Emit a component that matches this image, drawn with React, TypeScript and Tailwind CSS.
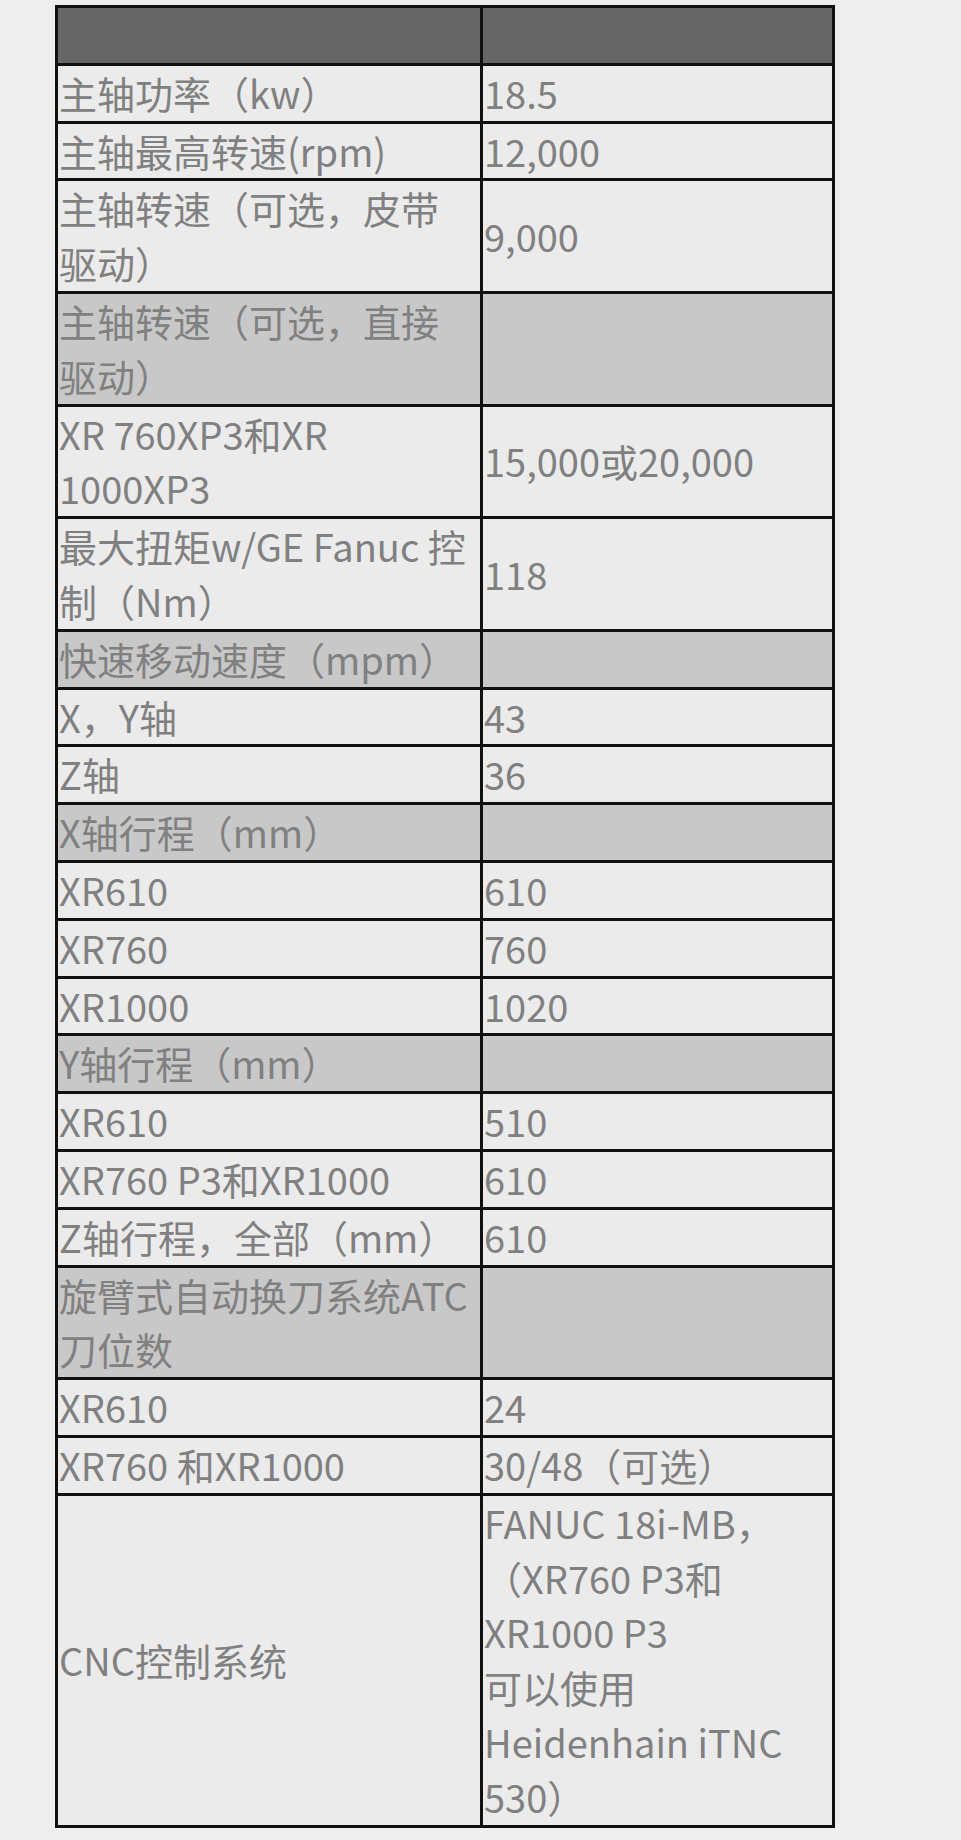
const rows: { left: string[]; right: string[]; shaded?: boolean }[] = [
  { left: ["主轴功率（kw）"], right: ["18.5"] },
  { left: ["主轴最高转速(rpm)"], right: ["12,000"] },
  { left: ["主轴转速（可选，皮带", "驱动）"], right: ["9,000"] },
  { left: ["主轴转速（可选，直接", "驱动）"], right: [""], shaded: true },
  { left: ["XR 760XP3和XR", "1000XP3"], right: ["15,000或20,000"] },
  { left: ["最大扭矩w/GE Fanuc 控", "制（Nm）"], right: ["118"] },
  { left: ["快速移动速度（mpm）"], right: [""], shaded: true },
  { left: ["X，Y轴"], right: ["43"] },
  { left: ["Z轴"], right: ["36"] },
  { left: ["X轴行程（mm）"], right: [""], shaded: true },
  { left: ["XR610"], right: ["610"] },
  { left: ["XR760"], right: ["760"] },
  { left: ["XR1000"], right: ["1020"] },
  { left: ["Y轴行程（mm）"], right: [""], shaded: true },
  { left: ["XR610"], right: ["510"] },
  { left: ["XR760 P3和XR1000"], right: ["610"] },
  { left: ["Z轴行程，全部（mm）"], right: ["610"] },
  { left: ["旋臂式自动换刀系统ATC", "刀位数"], right: [""], shaded: true },
  { left: ["XR610"], right: ["24"] },
  { left: ["XR760 和XR1000"], right: ["30/48（可选）"] },
  {
    left: ["CNC控制系统"],
    right: [
      "FANUC 18i-MB，",
      "（XR760 P3和",
      "XR1000 P3",
      "可以使用",
      "Heidenhain iTNC",
      "530）",
    ],
  },
];

function Lines({ lines }: { lines: string[] }) {
  return (
    <>
      {lines.map((line, i) => (
        <span key={i} className="block whitespace-pre">
          {line === "" ? "\u00a0" : line}
        </span>
      ))}
    </>
  );
}

export default function App() {
  return (
    <div
      className="min-h-[1840px] w-full bg-[#eeeeee] pt-[5px] pl-[55px]"
      style={{ fontFamily: '"Noto Sans CJK SC", "Noto Sans", sans-serif' }}
    >
      <table className="w-[777px] table-fixed border-collapse text-[38px] leading-[54.8px] text-[#808080]">
        <colgroup>
          <col className="w-[425px]" />
          <col className="w-[352px]" />
        </colgroup>
        <tbody>
          <tr className="bg-[#666666]">
            <td className="border-[3px] border-[#111111] p-0">&nbsp;</td>
            <td className="border-[3px] border-[#111111] p-0">&nbsp;</td>
          </tr>
          {rows.map((row, i) => (
            <tr key={i} className={row.shaded ? "bg-[#c8c8c8]" : "bg-[#ebebeb]"}>
              <td className="border-[3px] border-[#111111] p-0 pl-px align-middle">
                <Lines lines={row.left} />
              </td>
              <td className="border-[3px] border-[#111111] p-0 pl-px align-middle">
                <Lines lines={row.right} />
              </td>
            </tr>
          ))}
        </tbody>
      </table>
    </div>
  );
}
